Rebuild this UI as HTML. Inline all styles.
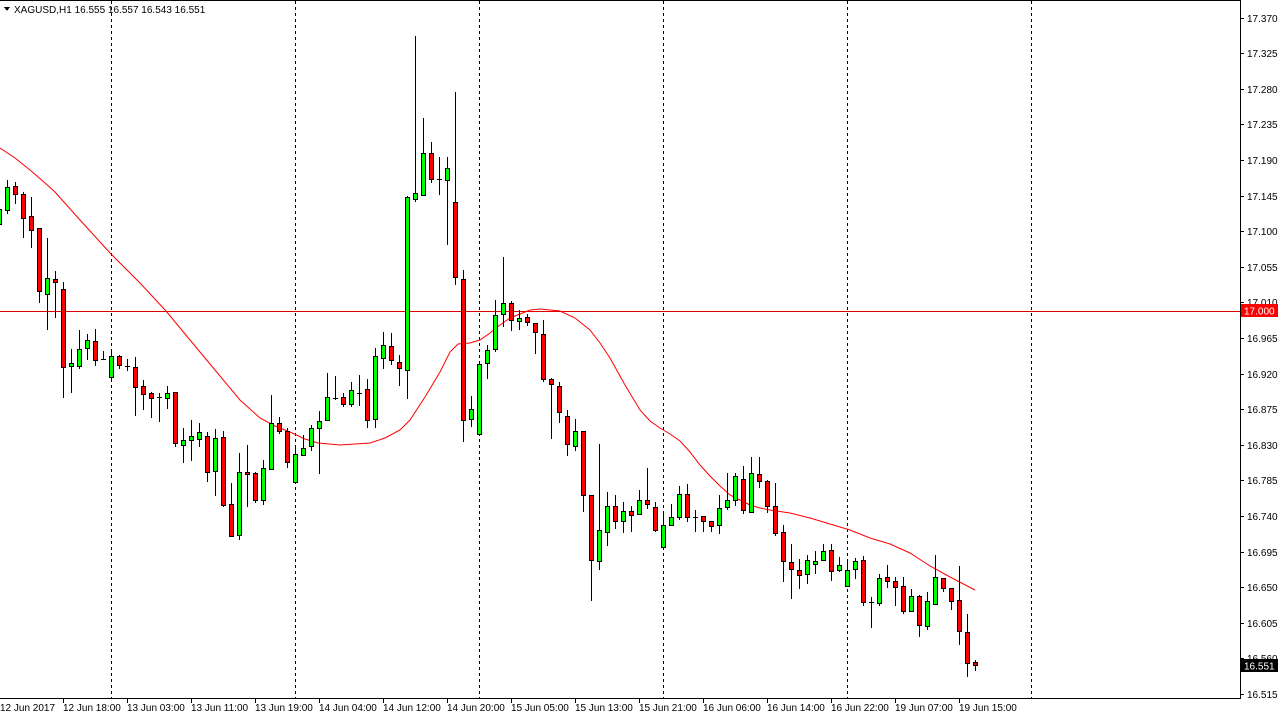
<!DOCTYPE html>
<html><head><meta charset="utf-8"><style>
html,body{margin:0;padding:0;background:#fff;}
body{width:1281px;height:719px;overflow:hidden;position:relative;}
svg{position:absolute;left:0;top:0;}
text{font-family:"Liberation Sans",sans-serif;font-size:10px;fill:#000;}
</style></head><body>
<svg width="1281" height="719" viewBox="0 0 1281 719" shape-rendering="crispEdges">
<rect x="0" y="0" width="1281" height="719" fill="#fff"/>
<!-- frame -->
<path d="M0 0.5H1240.5V698.5H0" fill="none" stroke="#000"/>
<!-- vertical separators -->
<g stroke="#000" stroke-dasharray="3,3">
<path d="M111.5 1V698M295.5 1V698M479.5 1V698M663.5 1V698M847.5 1V698M1031.5 1V698"/>
</g>
<!-- 17.000 line -->
<path d="M0 311.5H1240" stroke="#e00000"/>
<!-- MA -->
<polyline fill="none" stroke="#ff0000" stroke-width="1" shape-rendering="auto" points="0,148 15,158 30,170 45,183 55,192 80,220 111,254 140,283 166,311 190,340 215,370 240,400 260,418 275,426 290,432 305,439 318,443 340,445 370,443 385,438 400,430 410,420 425,397 440,372 450,352 458,344 470,343 480,340 490,333 500,325 510,318 520,314 530,310 540,309 560,311 575,318 590,330 600,343 610,358 625,385 640,410 650,421 660,428 670,434 680,441 690,452 700,465 710,476 720,486 730,495 740,500 750,505 760,508 770,510 790,513 810,518 830,524 850,530 870,538 890,544 910,553 930,566 950,577 975,590"/>
<!-- wicks -->
<path stroke="#000" fill="none" d="M-0.5 200V228M7.5 180V214M15.5 182V204M23.5 192V238M31.5 197V248M39.5 228V303M47.5 238V330M55.5 271V318M63.5 282V398M71.5 349V393M79.5 330V369M87.5 334V360M95.5 329V366M103.5 351V360M111.5 350V382M119.5 355V369M127.5 359V371M135.5 357V416M143.5 380V410M151.5 392V418M159.5 393V422M167.5 386V409M175.5 392V447M183.5 428V463M191.5 420V461M199.5 423V447M207.5 432V482M215.5 429V496M223.5 431V507M231.5 483V537M239.5 453V540M247.5 445V507M255.5 472V503M263.5 460V505M271.5 395V469M279.5 417V434M287.5 428V468M295.5 445V483M303.5 435V455M311.5 425V451M319.5 411V474M327.5 373V420M335.5 376V400M343.5 393V407M351.5 382V407M359.5 375V406M367.5 379V428M375.5 348V428M383.5 332V369M391.5 333V365M399.5 355V386M407.5 196V399M415.5 36V202M423.5 118V195M431.5 142V183M439.5 157V195M447.5 157V245M455.5 92V285M463.5 270V442M471.5 396V427M479.5 364V434M487.5 345V379M495.5 300V352M503.5 257V327M511.5 301V331M519.5 310V330M527.5 314V326M535.5 323V354M543.5 320V382M551.5 378V439M559.5 382V423M567.5 410V456M575.5 419V451M583.5 431V512M591.5 495V601M599.5 444V570M607.5 492V546M615.5 495V529M623.5 502V533M631.5 506V532M639.5 490V515M647.5 468V509M655.5 502V532M663.5 511V548M671.5 504V526M679.5 486V520M687.5 484V522M695.5 510V532M703.5 516V532M711.5 521V532M719.5 495V534M727.5 473V510M735.5 473V506M743.5 466V514M751.5 457V512M759.5 457V488M767.5 480V513M775.5 483V536M783.5 525V582M791.5 544V599M799.5 559V589M807.5 555V584M815.5 551V574M823.5 544V561M831.5 544V581M839.5 557V572M847.5 559V586M855.5 558V579M863.5 556V606M871.5 597V628M879.5 574V606M887.5 565V588M895.5 577V606M903.5 577V614M911.5 589V612M919.5 595V637M927.5 592V630M935.5 555V604M943.5 578V592M951.5 588V610M959.5 566V645M967.5 614V677M975.5 660V671"/>
<!-- dojis -->
<path stroke="#000" d="M101 359.5H106M125 366.5H130M157 397.5H162M333 398.5H338M357 393.5H362M437 179.5H442M693 517.5H698M869 602.5H874"/>
<!-- green bodies -->
<g fill="#00ff00" stroke="#000">
<rect x="-2.5" y="209.5" width="4" height="15"/><rect x="5.5" y="187.5" width="4" height="23"/><rect x="45.5" y="278.5" width="4" height="16"/><rect x="69.5" y="363.5" width="4" height="3"/><rect x="77.5" y="349.5" width="4" height="17"/><rect x="85.5" y="340.5" width="4" height="8"/><rect x="109.5" y="356.5" width="4" height="21"/><rect x="165.5" y="393.5" width="4" height="5"/><rect x="181.5" y="440.5" width="4" height="5"/><rect x="189.5" y="436.5" width="4" height="4"/><rect x="197.5" y="432.5" width="4" height="7"/><rect x="213.5" y="438.5" width="4" height="33"/><rect x="237.5" y="472.5" width="4" height="63"/><rect x="261.5" y="468.5" width="4" height="32"/><rect x="269.5" y="423.5" width="4" height="46"/><rect x="293.5" y="454.5" width="4" height="28"/><rect x="301.5" y="448.5" width="4" height="7"/><rect x="309.5" y="428.5" width="4" height="18"/><rect x="317.5" y="421.5" width="4" height="7"/><rect x="325.5" y="397.5" width="4" height="23"/><rect x="349.5" y="390.5" width="4" height="14"/><rect x="373.5" y="356.5" width="4" height="63"/><rect x="381.5" y="345.5" width="4" height="13"/><rect x="405.5" y="197.5" width="4" height="173"/><rect x="413.5" y="193.5" width="4" height="6"/><rect x="421.5" y="153.5" width="4" height="42"/><rect x="445.5" y="168.5" width="4" height="12"/><rect x="469.5" y="409.5" width="4" height="10"/><rect x="477.5" y="364.5" width="4" height="70"/><rect x="485.5" y="350.5" width="4" height="13"/><rect x="493.5" y="315.5" width="4" height="34"/><rect x="501.5" y="303.5" width="4" height="11"/><rect x="517.5" y="318.5" width="4" height="3"/><rect x="573.5" y="431.5" width="4" height="15"/><rect x="597.5" y="530.5" width="4" height="31"/><rect x="605.5" y="506.5" width="4" height="26"/><rect x="621.5" y="511.5" width="4" height="10"/><rect x="637.5" y="500.5" width="4" height="14"/><rect x="661.5" y="525.5" width="4" height="22"/><rect x="669.5" y="517.5" width="4" height="8"/><rect x="677.5" y="494.5" width="4" height="23"/><rect x="717.5" y="508.5" width="4" height="17"/><rect x="725.5" y="500.5" width="4" height="7"/><rect x="733.5" y="476.5" width="4" height="24"/><rect x="749.5" y="473.5" width="4" height="39"/><rect x="805.5" y="560.5" width="4" height="14"/><rect x="813.5" y="561.5" width="4" height="3"/><rect x="821.5" y="551.5" width="4" height="9"/><rect x="837.5" y="565.5" width="4" height="5"/><rect x="845.5" y="570.5" width="4" height="16"/><rect x="853.5" y="561.5" width="4" height="8"/><rect x="877.5" y="578.5" width="4" height="25"/><rect x="909.5" y="596.5" width="4" height="15"/><rect x="925.5" y="601.5" width="4" height="25"/><rect x="933.5" y="577.5" width="4" height="27"/>
</g>
<!-- red bodies -->
<g fill="#ff0000" stroke="#000">
<rect x="13.5" y="186.5" width="4" height="8"/><rect x="21.5" y="194.5" width="4" height="24"/><rect x="29.5" y="216.5" width="4" height="14"/><rect x="37.5" y="228.5" width="4" height="63"/><rect x="53.5" y="279.5" width="4" height="3"/><rect x="61.5" y="289.5" width="4" height="78"/><rect x="93.5" y="341.5" width="4" height="19"/><rect x="117.5" y="356.5" width="4" height="9"/><rect x="133.5" y="367.5" width="4" height="20"/><rect x="141.5" y="386.5" width="4" height="8"/><rect x="149.5" y="393.5" width="4" height="5"/><rect x="173.5" y="392.5" width="4" height="51"/><rect x="205.5" y="436.5" width="4" height="36"/><rect x="221.5" y="437.5" width="4" height="68"/><rect x="229.5" y="504.5" width="4" height="32"/><rect x="245.5" y="472.5" width="4" height="2"/><rect x="253.5" y="473.5" width="4" height="27"/><rect x="277.5" y="423.5" width="4" height="8"/><rect x="285.5" y="431.5" width="4" height="31"/><rect x="341.5" y="397.5" width="4" height="7"/><rect x="365.5" y="389.5" width="4" height="31"/><rect x="389.5" y="346.5" width="4" height="14"/><rect x="397.5" y="362.5" width="4" height="6"/><rect x="429.5" y="153.5" width="4" height="26"/><rect x="453.5" y="202.5" width="4" height="75"/><rect x="461.5" y="279.5" width="4" height="141"/><rect x="509.5" y="303.5" width="4" height="17"/><rect x="525.5" y="317.5" width="4" height="5"/><rect x="533.5" y="323.5" width="4" height="9"/><rect x="541.5" y="334.5" width="4" height="45"/><rect x="549.5" y="379.5" width="4" height="5"/><rect x="557.5" y="386.5" width="4" height="26"/><rect x="565.5" y="416.5" width="4" height="28"/><rect x="581.5" y="431.5" width="4" height="64"/><rect x="589.5" y="495.5" width="4" height="65"/><rect x="613.5" y="506.5" width="4" height="15"/><rect x="629.5" y="511.5" width="4" height="4"/><rect x="645.5" y="500.5" width="4" height="4"/><rect x="653.5" y="507.5" width="4" height="23"/><rect x="685.5" y="494.5" width="4" height="23"/><rect x="701.5" y="516.5" width="4" height="5"/><rect x="709.5" y="521.5" width="4" height="5"/><rect x="741.5" y="479.5" width="4" height="31"/><rect x="757.5" y="474.5" width="4" height="7"/><rect x="765.5" y="481.5" width="4" height="25"/><rect x="773.5" y="506.5" width="4" height="27"/><rect x="781.5" y="532.5" width="4" height="29"/><rect x="789.5" y="562.5" width="4" height="7"/><rect x="797.5" y="570.5" width="4" height="5"/><rect x="829.5" y="550.5" width="4" height="21"/><rect x="861.5" y="560.5" width="4" height="42"/><rect x="885.5" y="577.5" width="4" height="4"/><rect x="893.5" y="581.5" width="4" height="6"/><rect x="901.5" y="586.5" width="4" height="25"/><rect x="917.5" y="596.5" width="4" height="29"/><rect x="941.5" y="578.5" width="4" height="10"/><rect x="949.5" y="588.5" width="4" height="13"/><rect x="957.5" y="600.5" width="4" height="31"/><rect x="965.5" y="632.5" width="4" height="31"/><rect x="973.5" y="662.5" width="4" height="3"/>
</g>
<!-- price axis ticks -->
<path stroke="#000" d="M1240 18.5h4M1240 53.5h4M1240 89.5h4M1240 124.5h4M1240 160.5h4M1240 196.5h4M1240 231.5h4M1240 267.5h4M1240 302.5h4M1240 338.5h4M1240 374.5h4M1240 409.5h4M1240 445.5h4M1240 480.5h4M1240 516.5h4M1240 552.5h4M1240 587.5h4M1240 623.5h4M1240 658.5h4M1240 694.5h4"/>
<g>
<text x="1247" y="22">17.370</text><text x="1247" y="57">17.325</text><text x="1247" y="93">17.280</text><text x="1247" y="128">17.235</text><text x="1247" y="164">17.190</text><text x="1247" y="200">17.145</text><text x="1247" y="235">17.100</text><text x="1247" y="271">17.055</text><text x="1247" y="306">17.010</text><text x="1247" y="342">16.965</text><text x="1247" y="378">16.920</text><text x="1247" y="413">16.875</text><text x="1247" y="449">16.830</text><text x="1247" y="484">16.785</text><text x="1247" y="520">16.740</text><text x="1247" y="556">16.695</text><text x="1247" y="591">16.650</text><text x="1247" y="627">16.605</text><text x="1247" y="662">16.560</text><text x="1247" y="698">16.515</text>
</g>
<rect x="1241" y="304" width="37" height="13" fill="#ff0000"/>
<text x="1244" y="314.5" style="fill:#fff">17.000</text>
<rect x="1241" y="659" width="37" height="13" fill="#000"/>
<text x="1244" y="669.5" style="fill:#fff">16.551</text>
<!-- time axis ticks -->
<path stroke="#000" d="M63.5 698v5M127.5 698v5M191.5 698v5M255.5 698v5M319.5 698v5M383.5 698v5M447.5 698v5M511.5 698v5M575.5 698v5M639.5 698v5M703.5 698v5M767.5 698v5M831.5 698v5M895.5 698v5M959.5 698v5"/>
<g>
<text x="0" y="711">12 Jun 2017</text><text x="63" y="711">12 Jun 18:00</text><text x="127" y="711">13 Jun 03:00</text><text x="191" y="711">13 Jun 11:00</text><text x="255" y="711">13 Jun 19:00</text><text x="319" y="711">14 Jun 04:00</text><text x="383" y="711">14 Jun 12:00</text><text x="447" y="711">14 Jun 20:00</text><text x="511" y="711">15 Jun 05:00</text><text x="575" y="711">15 Jun 13:00</text><text x="639" y="711">15 Jun 21:00</text><text x="703" y="711">16 Jun 06:00</text><text x="767" y="711">16 Jun 14:00</text><text x="831" y="711">16 Jun 22:00</text><text x="895" y="711">19 Jun 07:00</text><text x="959" y="711">19 Jun 15:00</text>
</g>
<!-- header -->
<path d="M4 7H10L7 11Z" fill="#000"/>
<text x="14" y="13">XAGUSD,H1  16.555 16.557 16.543 16.551</text>
</svg>
</body></html>
